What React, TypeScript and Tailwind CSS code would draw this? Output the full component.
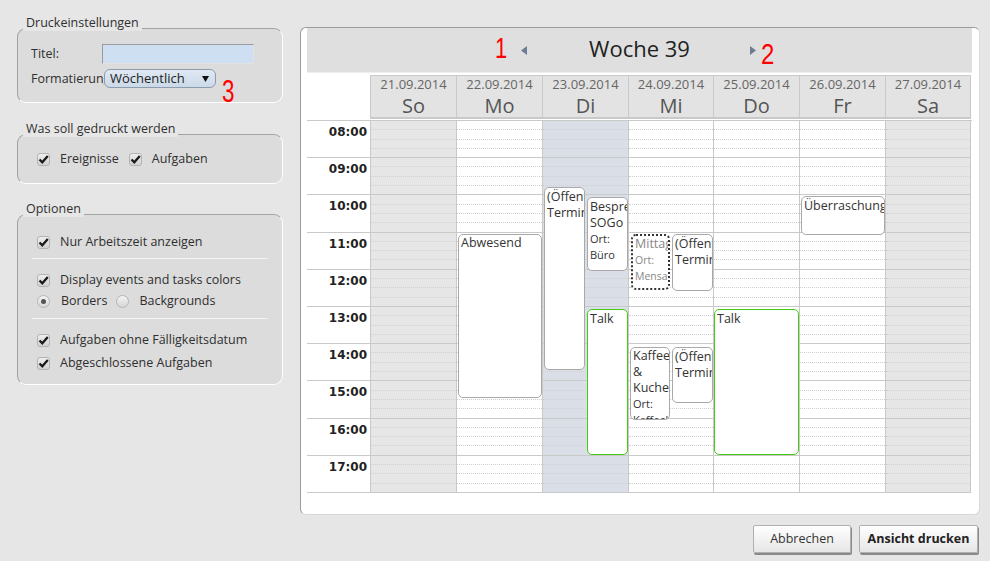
import React from "react"

function Check() {
  return (
    <span className="w-[13px] h-[13px] rounded-[3px] border border-[#b3b3b3] bg-gradient-to-b from-[#eeeeee] to-[#d2d2d2] flex items-center justify-center shrink-0">
      <svg width="11" height="11" viewBox="0 0 11 11">
        <path d="M1.5 5.5 L4.3 8.3 L9.8 2" fill="none" stroke="#1a1a1a" strokeWidth="2.3" />
      </svg>
    </span>
  )
}

function Radio({ on }: { on?: boolean }) {
  return (
    <span className="w-[13px] h-[13px] rounded-full border border-[#b5b5b5] bg-gradient-to-b from-[#f4f4f4] to-[#d6d6d6] flex items-center justify-center shrink-0">
      {on && <span className="w-[5px] h-[5px] rounded-full bg-[#555]" />}
    </span>
  )
}

const days = [
  { d: "21.09.2014", n: "So", bg: "bg-[#e6e6e6]" },
  { d: "22.09.2014", n: "Mo", bg: "bg-white" },
  { d: "23.09.2014", n: "Di", bg: "bg-[#d9dee7]" },
  { d: "24.09.2014", n: "Mi", bg: "bg-white" },
  { d: "25.09.2014", n: "Do", bg: "bg-white" },
  { d: "26.09.2014", n: "Fr", bg: "bg-white" },
  { d: "27.09.2014", n: "Sa", bg: "bg-[#e6e6e6]" },
]

const hours = ["08:00", "09:00", "10:00", "11:00", "12:00", "13:00", "14:00", "15:00", "16:00", "17:00"]

const evBase = "absolute overflow-hidden rounded-[5px] bg-white px-[2px] text-[12.5px] leading-[16px] text-[#333]"

function Events({ day }: { day: number }) {
  if (day === 1)
    return (
      <div className={`${evBase} border border-[#a9a9a9] left-[1px] top-[113px] w-[84px] h-[164px]`}>Abwesend</div>
    )
  if (day === 2)
    return (
      <>
        <div className={`${evBase} border border-[#a9a9a9] left-[1px] top-[66px] w-[41px] h-[183px] pt-[1px]`}>(Öffentlicher Termin)</div>
        <div className={`${evBase} border border-[#a9a9a9] left-[44px] top-[76px] w-[41px] h-[74px] pt-[1px]`}>
          <div>Besprechung SOGo</div>
          <div className="text-[11px]">Ort:</div>
          <div className="text-[11px]">Büro</div>
        </div>
        <div className={`${evBase} border border-[#44cc11] left-[44px] top-[188px] w-[41px] h-[146px] pt-[1px]`}>Talk</div>
      </>
    )
  if (day === 3)
    return (
      <>
        <div className={`${evBase} border-2 border-dotted border-[#333] left-[2px] top-[113px] w-[39px] h-[56px] px-[1px] text-[#888]`}>
          <div>Mittag</div>
          <div className="text-[10.5px]">Ort:</div>
          <div className="text-[10.5px]">Mensa</div>
        </div>
        <div className={`${evBase} border border-[#a9a9a9] left-[43px] top-[113px] w-[41px] h-[57px] pt-[1px]`}>(Öffentlicher Termin)</div>
        <div className={`${evBase} border border-[#a9a9a9] left-[1px] top-[226px] w-[40px] h-[73px]`}>
          <div>Kaffee & Kuchen</div>
          <div className="text-[11px]">Ort:</div>
          <div className="text-[11px]">Kaffeeküche</div>
        </div>
        <div className={`${evBase} border border-[#a9a9a9] left-[43px] top-[226px] w-[41px] h-[56px] pt-[1px]`}>(Öffentlicher Termin)</div>
      </>
    )
  if (day === 4)
    return (
      <div className={`${evBase} border border-[#44cc11] left-0 top-[188px] w-[85px] h-[146px] pt-[1px]`}>Talk</div>
    )
  if (day === 5)
    return (
      <div className={`${evBase} border border-[#a9a9a9] left-[1px] top-[75px] w-[84px] h-[39px] pt-[1px]`}>Überraschung</div>
    )
  return null
}

export default function App() {
  return (
    <div className="w-[990px] h-[561px] bg-[#e6e6e6] flex font-['Open_Sans',sans-serif] text-[12.5px] text-[#2f2f2f] overflow-hidden">
      {/* left: print settings */}
      <div className="w-[283px] pl-[17px] flex flex-col">
        <fieldset className="mt-[20px] border border-[#a3a3a3] border-b-white border-r-white rounded-[9px] bg-[#dcdcdc]">
          <legend className="ml-[5px] px-[3px] bg-[#e6e6e6] leading-[16px] relative -top-[5px]">Druckeinstellungen</legend>
          <div className="pl-[13px] pt-[8px] pb-[14px]">
            <div className="flex items-center h-[20px]">
              <span className="w-[71px]">Titel:</span>
              <span className="w-[152px] h-[20px] bg-[#cddff0] border border-[#9a9a9a] border-b-[#e2e2e2] border-r-[#e2e2e2]" />
            </div>
            <div className="flex items-start mt-[5px] h-[19px]">
              <span className="w-[73px] h-[19px] overflow-hidden whitespace-nowrap leading-[19px]">Formatierung</span>
              <span className="w-[112px] h-[19px] rounded-[6px] border border-[#8c9cad] bg-gradient-to-b from-[#e0e9f3] to-[#cbd9e8] flex items-center pl-[5px] pr-[6px] text-[13px] text-[#222]">
                <span className="flex-1 leading-[17px]">Wöchentlich</span>
                <svg width="7" height="6" viewBox="0 0 7 6"><path d="M0 0 H7 L3.5 6 Z" fill="#111" /></svg>
              </span>
              <span className="ml-[6px] mt-[7px] inline-block scale-x-[0.7] origin-left font-['Liberation_Sans',sans-serif] text-[32px] leading-[30px] text-[#ff0000]">3</span>
            </div>
          </div>
        </fieldset>

        <fieldset className="mt-[23px] border border-[#a3a3a3] border-b-white border-r-white rounded-[9px] bg-[#dcdcdc]">
          <legend className="ml-[5px] px-[3px] bg-[#e6e6e6] leading-[16px] relative -top-[5px]">Was soll gedruckt werden</legend>
          <div className="pl-[19px] pt-[7px] pb-[14px]">
            <div className="flex items-center h-[20px]">
              <Check />
              <span className="ml-[10px]">Ereignisse</span>
              <span className="ml-[10px]"><Check /></span>
              <span className="ml-[10px]">Aufgaben</span>
            </div>
          </div>
        </fieldset>

        <fieldset className="mt-[22px] border border-[#a3a3a3] border-b-white border-r-white rounded-[9px] bg-[#dcdcdc]">
          <legend className="ml-[5px] px-[3px] bg-[#e6e6e6] leading-[16px] relative -top-[5px]">Optionen</legend>
          <div className="pt-[10px] pb-[11px] flex flex-col">
            <div className="pl-[19px] flex items-center h-[20px]">
              <Check />
              <span className="ml-[10px]">Nur Arbeitszeit anzeigen</span>
            </div>
            <div className="mt-[6px] mx-[14px] h-px bg-[#f3f3f3]" />
            <div className="pl-[19px] mt-[11px] flex items-center h-[20px]">
              <Check />
              <span className="ml-[10px]">Display events and tasks colors</span>
            </div>
            <div className="pl-[19px] mt-[1px] flex items-center h-[20px]">
              <Radio on />
              <span className="ml-[11px]">Borders</span>
              <span className="ml-[9px]"><Radio /></span>
              <span className="ml-[10px]">Backgrounds</span>
            </div>
            <div className="mt-[7px] mx-[14px] h-px bg-[#f3f3f3]" />
            <div className="pl-[19px] mt-[11px] flex items-center h-[20px]">
              <Check />
              <span className="ml-[10px]">Aufgaben ohne Fälligkeitsdatum</span>
            </div>
            <div className="pl-[19px] mt-[3px] flex items-center h-[20px]">
              <Check />
              <span className="ml-[10px]">Abgeschlossene Aufgaben</span>
            </div>
          </div>
        </fieldset>
      </div>

      {/* right: preview */}
      <div className="ml-[17px] pt-[27px] flex flex-col">
        <div className="w-[680px] h-[488px] bg-white rounded-[6px] border border-[#9c9c9c] border-r-[#d8d8d8] border-b-[#d8d8d8] pl-[6px] pr-[7px] overflow-hidden">
          <div className="h-[45px] bg-[#dfdfdf] border-b border-[#eeeeee] grid grid-cols-[1fr_auto_1fr] items-center">
            <div className="flex justify-end items-center">
              <span className="font-['Liberation_Sans',sans-serif] text-[29px] leading-[30px] text-[#ff0000] inline-block scale-x-[0.75] -mr-[2px] -mt-[5px]">1</span>
              <svg className="ml-[14px]" width="6" height="9" viewBox="0 0 6 9"><path d="M6 0 V9 L0 4.5 Z" fill="#6a7d92" /></svg>
              <span className="w-[62px]" />
            </div>
            <div className="text-[22px] leading-[30px] text-[#222] -mt-[4px]">Woche 39</div>
            <div className="flex items-center">
              <span className="w-[60px]" />
              <svg width="6" height="9" viewBox="0 0 6 9"><path d="M0 0 V9 L6 4.5 Z" fill="#6a7d92" /></svg>
              <span className="ml-[5px] mt-[7px] font-['Liberation_Sans',sans-serif] text-[30px] leading-[30px] text-[#ff0000] inline-block scale-x-[0.8] origin-left">2</span>
            </div>
          </div>

          <div className="mt-[2px] grid grid-cols-[63px_86px_86px_86px_85px_86px_86px_86px]">
            <div />
            {days.map((d, i) => (
              <div
                key={d.n}
                className={`h-[44px] bg-[#e3e3e3] border-t border-l border-b-2 border-[#c9c9c9] ${i === 6 ? "border-r" : ""} flex flex-col items-center pt-px`}
              >
                <span className="text-[13px] leading-[15px] text-[#666]">{d.d}</span>
                <span className="mt-[2px] text-[20px] leading-[24px] text-[#555]">{d.n}</span>
              </div>
            ))}
          </div>

          <div className="mt-[1px] border-t border-[#c9c9c9] grid grid-cols-[63px_86px_86px_86px_85px_86px_86px_86px]">
            <div className="flex flex-col">
              {hours.map((h) => (
                <div key={h} className="h-[37.2px] border-b border-[#c9c9c9] text-right pr-[3px] pt-[4px] font-['DejaVu_Sans',sans-serif] font-bold text-[12px] leading-[14px] text-[#222]">
                  {h}
                </div>
              ))}
            </div>
            {days.map((d, i) => (
              <div key={d.n} className={`relative flex flex-col border-l border-[#c9c9c9] ${i === 6 ? "border-r" : ""} ${d.bg}`}>
                {hours.map((h) => (
                  <div key={h} className="h-[37.2px] border-b border-[#c9c9c9] flex flex-col">
                    <div className="flex-1 border-b border-dotted border-[#d0d0d0]" />
                    <div className="flex-1 border-b border-dotted border-[#d0d0d0]" />
                    <div className="flex-1 border-b border-dotted border-[#d0d0d0]" />
                    <div className="flex-1" />
                  </div>
                ))}
                <Events day={i} />
              </div>
            ))}
          </div>
        </div>

        <div className="mt-[10px] pr-[2px] flex justify-end gap-[8px]">
          <button className="w-[98px] h-[28px] border border-[#b0b0b0] rounded-[2px] bg-gradient-to-b from-white to-[#e6e6e6] shadow-[1px_2px_0_#8a8a8a] text-[12.5px] text-[#333]">
            Abbrechen
          </button>
          <button className="w-[119px] h-[28px] border border-[#b0b0b0] rounded-[2px] bg-gradient-to-b from-white to-[#e6e6e6] shadow-[1px_2px_0_#8a8a8a] text-[12.5px] font-bold text-[#222]">
            Ansicht drucken
          </button>
        </div>
      </div>
    </div>
  )
}
